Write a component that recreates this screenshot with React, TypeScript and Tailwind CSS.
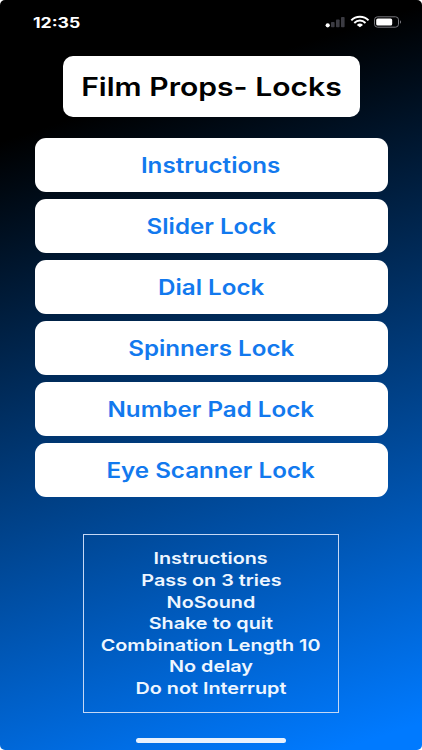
import React from "react";

const locks = [
  "Instructions",
  "Slider Lock",
  "Dial Lock",
  "Spinners Lock",
  "Number Pad Lock",
  "Eye Scanner Lock",
];

const settings = [
  "Instructions",
  "Pass on 3 tries",
  "NoSound",
  "Shake to quit",
  "Combination Length 10",
  "No delay",
  "Do not Interrupt",
];

const StatusIcons: React.FC = () => (
  <svg width="78" height="14" viewBox="0 0 78 14" fill="none">
    {/* Signal */}
    <circle cx="2.7" cy="10.3" r="2.1" fill="white" />
    <rect x="6" y="7" width="3.6" height="5.2" rx="0.8" fill="#3b3b42" />
    <rect x="11" y="4.4" width="3.6" height="7.8" rx="0.8" fill="#3b3b42" />
    <rect x="16" y="2" width="3.6" height="10.2" rx="0.8" fill="#3b3b42" />
    {/* Wifi */}
    <path d="M26.3 5.4C30.9 0.6 38.9 0.6 43.5 5.4" stroke="white" strokeWidth="2" />
    <path d="M29.3 8C32.5 4.7 37.3 4.7 40.5 8" stroke="white" strokeWidth="1.9" />
    <path d="M31.8 9.9C33.7 8.1 36.1 8.1 38 9.9L34.9 12.3Z" fill="white" />
    {/* Battery */}
    <rect x="49.5" y="1.8" width="24" height="10.4" rx="3" stroke="#77777d" />
    <rect x="51.2" y="3.5" width="16" height="7" rx="1.6" fill="white" />
    <path d="M75 5.2C76.4 5.8 76.4 8.2 75 8.8Z" fill="#77777d" />
  </svg>
);

const App: React.FC = () => {
  return (
    <div className="h-[750px] w-[422px] overflow-hidden bg-white font-['Inter',sans-serif]">
      <div className="flex h-full flex-col items-center rounded-[5px] bg-[linear-gradient(162deg,#000000_16%,#007aff_97%)]">
        {/* Status bar */}
        <header className="flex h-14 w-full shrink-0 items-start justify-between pt-[15px] pr-[19px] pl-[33px]">
          <span className="origin-left scale-x-[1.26] text-[14px] leading-[15px] font-bold text-white">
            12:35
          </span>
          <StatusIcons />
        </header>

        <h1 className="flex h-[61px] w-[297px] shrink-0 items-center justify-center rounded-[10px] bg-white pt-0.5 text-[25.5px] font-semibold text-black">
          <span className="scale-x-[1.18] whitespace-nowrap">Film Props- Locks</span>
        </h1>

        <nav className="mt-[21px] flex w-[353px] shrink-0 flex-col gap-[7px]">
          {locks.map((label) => (
            <button
              key={label}
              className="flex h-[54px] items-center justify-center rounded-[11px] bg-white pt-0.5 text-[21px] font-semibold text-[#1279ee]"
            >
              <span className="scale-x-[1.15] whitespace-nowrap">{label}</span>
            </button>
          ))}
        </nav>

        {/* Current settings */}
        <section className="mt-[37px] flex h-[179px] w-[256px] shrink-0 flex-col items-center justify-center border border-[#c5d8f5] pt-px text-[16.5px] leading-[21.6px] font-semibold text-[#eef6ff]">
          {settings.map((line) => (
            <p key={line} className="scale-x-[1.2] whitespace-nowrap">
              {line}
            </p>
          ))}
        </section>

        <div className="mt-[25px] h-[5px] w-[150px] shrink-0 rounded-full bg-[#e8f1fd]" />
      </div>
    </div>
  );
};

export default App;
